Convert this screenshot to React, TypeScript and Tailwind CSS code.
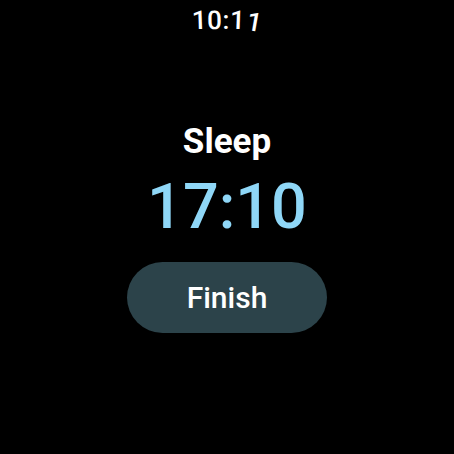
import React from 'react';

const font = { fontFamily: 'Roboto, "Noto Sans", sans-serif' };

const App: React.FC = () => {
  return (
    <div className="w-[454px] h-[454px] bg-black text-white overflow-hidden flex flex-col items-center" style={font}>
      {/* Curved status time */}
      <div className="mt-[7px] flex items-end text-[26px] font-medium leading-none h-[26px]">
        <span className="inline-block -rotate-2">1</span>
        <span className="inline-block -rotate-1">0</span>
        <span className="inline-block px-[1px]">:</span>
        <span className="inline-block rotate-2">1</span>
        <span className="inline-block ml-[2px] rotate-[10deg] translate-y-[2px]">1</span>
      </div>

      <div className="mt-[89px] text-[35px] font-bold leading-[40px]">Sleep</div>
      <div className="mt-[14px] text-[63px] font-medium leading-[62px] text-[#8fd7f7]">17:10</div>

      <button className="mt-[24px] w-[200px] h-[71px] rounded-full bg-[#2c434a] text-[30px] font-medium text-white">
        Finish
      </button>
    </div>
  );
};

export default App;
